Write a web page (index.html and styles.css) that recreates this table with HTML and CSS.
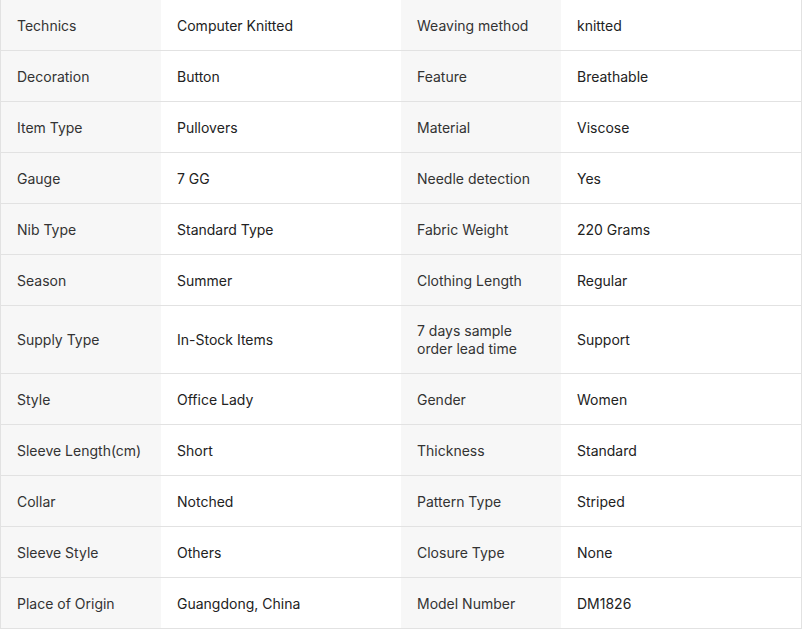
FILE: index.html
```html
<!DOCTYPE html>
<html>
<head>
<meta charset="utf-8">
<link rel="stylesheet" href="styles.css">
</head>
<body>
<div class="specs">
  <div class="lbl">Technics</div><div class="val">Computer Knitted</div><div class="lbl">Weaving method</div><div class="val">knitted</div>
  <div class="lbl">Decoration</div><div class="val">Button</div><div class="lbl">Feature</div><div class="val">Breathable</div>
  <div class="lbl">Item Type</div><div class="val">Pullovers</div><div class="lbl">Material</div><div class="val">Viscose</div>
  <div class="lbl">Gauge</div><div class="val">7 GG</div><div class="lbl">Needle detection</div><div class="val">Yes</div>
  <div class="lbl">Nib Type</div><div class="val">Standard Type</div><div class="lbl">Fabric Weight</div><div class="val">220 Grams</div>
  <div class="lbl">Season</div><div class="val">Summer</div><div class="lbl">Clothing Length</div><div class="val">Regular</div>
  <div class="lbl">Supply Type</div><div class="val">In-Stock Items</div><div class="lbl">7 days sample order lead time</div><div class="val">Support</div>
  <div class="lbl">Style</div><div class="val">Office Lady</div><div class="lbl">Gender</div><div class="val">Women</div>
  <div class="lbl">Sleeve Length(cm)</div><div class="val">Short</div><div class="lbl">Thickness</div><div class="val">Standard</div>
  <div class="lbl">Collar</div><div class="val">Notched</div><div class="lbl">Pattern Type</div><div class="val">Striped</div>
  <div class="lbl">Sleeve Style</div><div class="val">Others</div><div class="lbl">Closure Type</div><div class="val">None</div>
  <div class="lbl">Place of Origin</div><div class="val">Guangdong, China</div><div class="lbl">Model Number</div><div class="val">DM1826</div>
</div>
</body>
</html>
```
FILE: styles.css
```css
html, body {
  margin: 0;
  padding: 0;
  background: #fff;
}
.specs {
  display: grid;
  grid-template-columns: 160px 240px 160px 240px;
  width: 800px;
  border-left: 1px solid #e2e2e2;
  border-right: 1px solid #e2e2e2;
  font-family: Inter, "Noto Sans", sans-serif;
  font-size: 14px;
  line-height: 18px;
}
.lbl, .val {
  box-sizing: border-box;
  min-height: 51px;
  padding: 16px 16px 15px;
  border-bottom: 1px solid #e2e2e2;
  display: flex;
  align-items: center;
}
.lbl {
  background: #f7f7f7;
  color: #333;
}
.val {
  background: #fff;
  color: #222;
}
```
